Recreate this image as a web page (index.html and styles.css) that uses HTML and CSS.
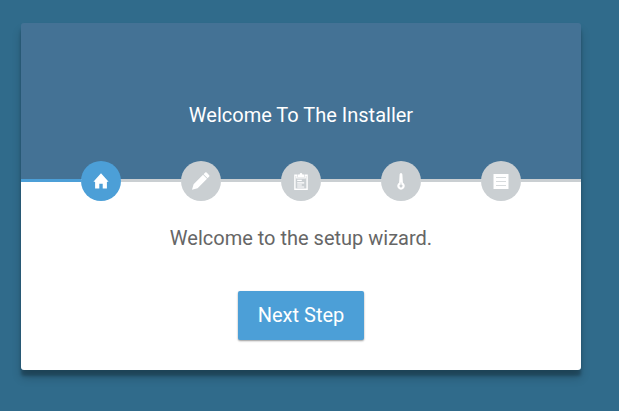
FILE: index.html
```html
<!DOCTYPE html>
<html lang="en">
<head>
<meta charset="utf-8">
<title>Installer</title>
<link rel="stylesheet" href="styles.css">
</head>
<body>
<main class="box">
  <header class="header"><h1 class="title">Welcome To The Installer</h1></header>
  <ul class="steps">
    <li class="divider active"></li>
    <li class="step active"><svg viewBox="0 0 16 17"><path d="M8 0.3L0.4 8.8h1.7V15.6h4.2v-4.8h3.4v4.8h4.2V8.8h1.7z"/></svg></li>
    <li class="divider"></li>
    <li class="step"><svg class="wide" viewBox="0 0 18 18"><path d="M0 17.8l1.6-5.6L11 2.8 15 6.8 5.6 16.2zM11.6 2.2L13.2.6q.7-.6 1.4 0l2.6 2.6q.6.7 0 1.4L15.6 6.2z"/></svg></li>
    <li class="divider"></li>
    <li class="step"><svg viewBox="0 0 16 17"><path fill-rule="evenodd" d="M1.2 1.5h3V4.5h7.6v-3h3V17H1.2zM2.6 2.9V15.6h10.8V2.9h-.6v2.6H3.2V2.9z"/><path d="M4.6 1.4h2Q6.8 0 8 0t1.4 1.4h2v2.8H4.6zM4.2 6.8h4.6V8H4.2zM4.2 9.2h7V10.4h-7zM4.2 11.5h4.6v1.1H4.2zM4.2 13.6h7v1h-7z"/></svg></li>
    <li class="divider"></li>
    <li class="step"><svg viewBox="0 0 16 17"><path fill-rule="evenodd" d="M8 0q1.3 0 1.4 1.6l.5 8.2A3.7 3.7 0 1 1 6.1 9.8L6.6 1.6Q6.7 0 8 0zM7.7 9.6v2a1.4 1.4 0 1 0 .6 0v-2z"/></svg></li>
    <li class="divider"></li>
    <li class="step"><svg viewBox="0 0 16 17"><path fill-rule="evenodd" d="M.5 1h15v15H.5zM3 4.3v.6h10v-.6zM3 8.3v.6h10v-.6zM3 12.3v.6h10v-.6z"/></svg></li>
    <li class="divider"></li>
  </ul>
  <section class="main">
    <p class="message">Welcome to the setup wizard.</p>
    <a class="button">Next Step</a>
  </section>
</main>
</body>
</html>
```
FILE: styles.css
```css
* { box-sizing: border-box; }
body { margin: 0; height: 411px; padding: 23px 38px 41px 21px; background: #306b8b; font-family: Roboto, sans-serif; overflow: hidden; }
.box { height: 347px; border-radius: 3px; overflow: hidden; background: linear-gradient(#447295 156px, #fff 156px); box-shadow: 0 8px 10px rgba(0,0,0,.19), 0 6px 3px rgba(0,0,0,.23); }
.header { height: 156px; padding-top: 80px; text-align: center; }
.title { margin: 0; font-size: 20px; line-height: 24px; font-weight: 400; color: #fff; }
.steps { display: flex; align-items: center; list-style: none; height: 40px; margin: -18px 0 0; padding: 0; }
.divider { width: 60px; height: 3px; margin-bottom: 1px; background: #cacfd2; }
.divider.active, .step.active { background: #4c9fd7; }
.step { display: flex; align-items: center; justify-content: center; width: 40px; height: 40px; border-radius: 50%; background: #cacfd2; }
.step svg { width: 16px; height: 17px; fill: #fff; }
.step .wide { width: 18px; height: 18px; }
.main { display: flex; flex-direction: column; align-items: center; padding-top: 25px; }
.message { margin: 0 0 41px; font-size: 20px; line-height: 24px; color: #666; }
.button { width: 126px; height: 49px; border-radius: 2px; background: #4c9fd7; color: #fff; font-size: 20px; line-height: 48px; text-align: center; box-shadow: 0 1px 2px rgba(0,0,0,.4); }
```
